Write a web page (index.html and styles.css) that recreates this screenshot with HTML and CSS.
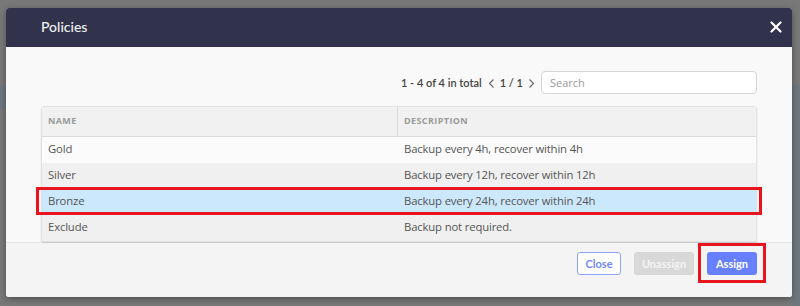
FILE: index.html
```html
<!DOCTYPE html>
<html>
<head>
<meta charset="utf-8">
<link rel="stylesheet" href="styles.css">
</head>
<body>
<div class="backdrop">
  <div class="band band-left"></div>
  <div class="band band-right"></div>
  <div class="dialog">
    <div class="dlg-header">
      <span class="dlg-title">Policies</span>
      <svg class="dlg-close" width="12" height="12" viewBox="0 0 12 12"><path d="M1.5 1.5 L10.5 10.5 M10.5 1.5 L1.5 10.5" stroke="#fff" stroke-width="2.2" stroke-linecap="round"/></svg>
    </div>
    <div class="dlg-body">
      <div class="toolbar">
        <span class="total">1 - 4 of 4 in total</span>
        <svg class="chev" width="7" height="11" viewBox="0 0 7 11"><path d="M5.5 1.5 L1.5 5.5 L5.5 9.5" fill="none" stroke="#666" stroke-width="1.1"/></svg>
        <span class="pages">1 / 1</span>
        <svg class="chev" width="7" height="11" viewBox="0 0 7 11"><path d="M1.5 1.5 L5.5 5.5 L1.5 9.5" fill="none" stroke="#666" stroke-width="1.1"/></svg>
        <input class="search" type="text" placeholder="Search">
      </div>
      <div class="grid">
        <div class="row head">
          <div class="cell c1">NAME</div>
          <div class="cell">DESCRIPTION</div>
        </div>
        <div class="row odd">
          <div class="cell c1">Gold</div>
          <div class="cell">Backup every 4h, recover within 4h</div>
        </div>
        <div class="row even">
          <div class="cell c1">Silver</div>
          <div class="cell">Backup every 12h, recover within 12h</div>
        </div>
        <div class="row selected">
          <div class="cell c1">Bronze</div>
          <div class="cell">Backup every 24h, recover within 24h</div>
        </div>
        <div class="row even">
          <div class="cell c1">Exclude</div>
          <div class="cell">Backup not required.</div>
        </div>
      </div>
    </div>
    <div class="dlg-footer">
      <button class="btn btn-outline">Close</button>
      <button class="btn btn-disabled">Unassign</button>
      <button class="btn btn-primary marked">Assign</button>
    </div>
  </div>
</div>
</body>
</html>
```

FILE: styles.css
```css
html, body {
  margin: 0;
  padding: 0;
}
body {
  width: 800px;
  height: 306px;
  overflow: hidden;
  background: #787878;
  font-family: Lato, "Open Sans", sans-serif;
}
.backdrop {
  position: relative;
  height: 306px;
  padding: 8px 8px 0 6px;
  box-sizing: border-box;
}
.band {
  position: absolute;
  background: #6e777d;
}
.band-left {
  left: 0;
  width: 6px;
  top: 86px;
  height: 24px;
}
.band-right {
  right: 0;
  width: 8px;
  top: 85px;
  height: 221px;
}
.dialog {
  position: relative;
  width: 786px;
  height: 289px;
  border-radius: 3px;
  overflow: hidden;
  background: #f9f9f9;
  box-shadow: 0 2px 6px rgba(0, 0, 0, 0.35);
  display: flex;
  flex-direction: column;
}
.dlg-header {
  height: 39px;
  flex: none;
  background: #31324b;
  display: flex;
  align-items: center;
  justify-content: space-between;
  padding: 0 10px 0 35px;
}
.dlg-title {
  color: #f2f2f2;
  font-size: 14px;
  font-weight: 500;
  margin-top: -3px;
}
.dlg-close {
  margin-top: -2px;
}
.dlg-body {
  flex: 1;
  padding: 24px 35px 0 35px;
  border-bottom: 1px solid #e4e4e4;
}
.toolbar {
  display: flex;
  justify-content: flex-end;
  align-items: center;
  height: 23px;
  margin-bottom: 12px;
  color: #444;
  font-size: 11px;
  font-weight: 600;
}
.total {
  margin-right: 6px;
}
.chev {
  margin-top: 2px;
}
.pages {
  margin: 0 5px 0 5px;
}
.search {
  margin-left: 6px;
  width: 216px;
  height: 23px;
  box-sizing: border-box;
  border: 1px solid #d6d6d6;
  border-radius: 4px;
  background: #fff;
  padding: 0 8px;
  font-family: "Open Sans", sans-serif;
  font-size: 11px;
  color: #555;
  outline: none;
}
.search::placeholder {
  color: #999;
}
.grid {
  border: 1px solid #e2e2e2;
  border-radius: 3px;
  box-shadow: 0 2px 2px rgba(0, 0, 0, 0.12);
  background: #fff;
}
.row {
  position: relative;
  display: grid;
  grid-template-columns: 356px 1fr;
  height: 26px;
  align-items: center;
  font-family: "Open Sans", sans-serif;
  font-size: 11.3px;
  color: #555;
  letter-spacing: -0.15px;
}
.cell {
  padding: 0 0 4px 6px;
  box-sizing: border-box;
  height: 100%;
  display: flex;
  align-items: center;
  white-space: nowrap;
}
.row.head {
  height: 29px;
  background: #f1f1f1;
  border-bottom: 1px solid #dcdcdc;
  font-size: 9px;
  font-weight: 700;
  color: #9a9a9a;
  letter-spacing: 0.4px;
}
.row.head .cell {
  padding-bottom: 3px;
}
.row.head .c1 {
  border-right: 1px solid #dcdcdc;
}
.row.odd {
  background: #fbfbfb;
}
.row.even {
  background: #f0f0f0;
}
.row.selected {
  background: #cce8fc;
}
.row.selected::after {
  content: "";
  position: absolute;
  left: -6px;
  right: -6px;
  top: -2px;
  bottom: 0;
  border: 3px solid #e8141e;
}
.dlg-footer {
  flex: 1;
  background: #f4f4f4;
  display: flex;
  justify-content: flex-end;
  align-items: flex-start;
  gap: 13px;
  padding: 9px 35px 0 0;
}
.btn {
  position: relative;
  height: 23px;
  box-sizing: border-box;
  border-radius: 3px;
  font-family: Lato, sans-serif;
  font-size: 11px;
  font-weight: 700;
  padding: 0;
  cursor: pointer;
}
.btn-outline {
  width: 44px;
  background: #fff;
  border: 1px solid #8ea3ff;
  color: #7289ff;
}
.btn-disabled {
  width: 60px;
  background: #d8d8d8;
  border: none;
  color: #f4f4f4;
}
.btn-primary {
  width: 50px;
  background: #6680ff;
  border: none;
  color: #fff;
}
.marked::after {
  content: "";
  position: absolute;
  left: -9px;
  right: -9px;
  top: -9px;
  bottom: -8px;
  border: 3px solid #e8141e;
}
```
